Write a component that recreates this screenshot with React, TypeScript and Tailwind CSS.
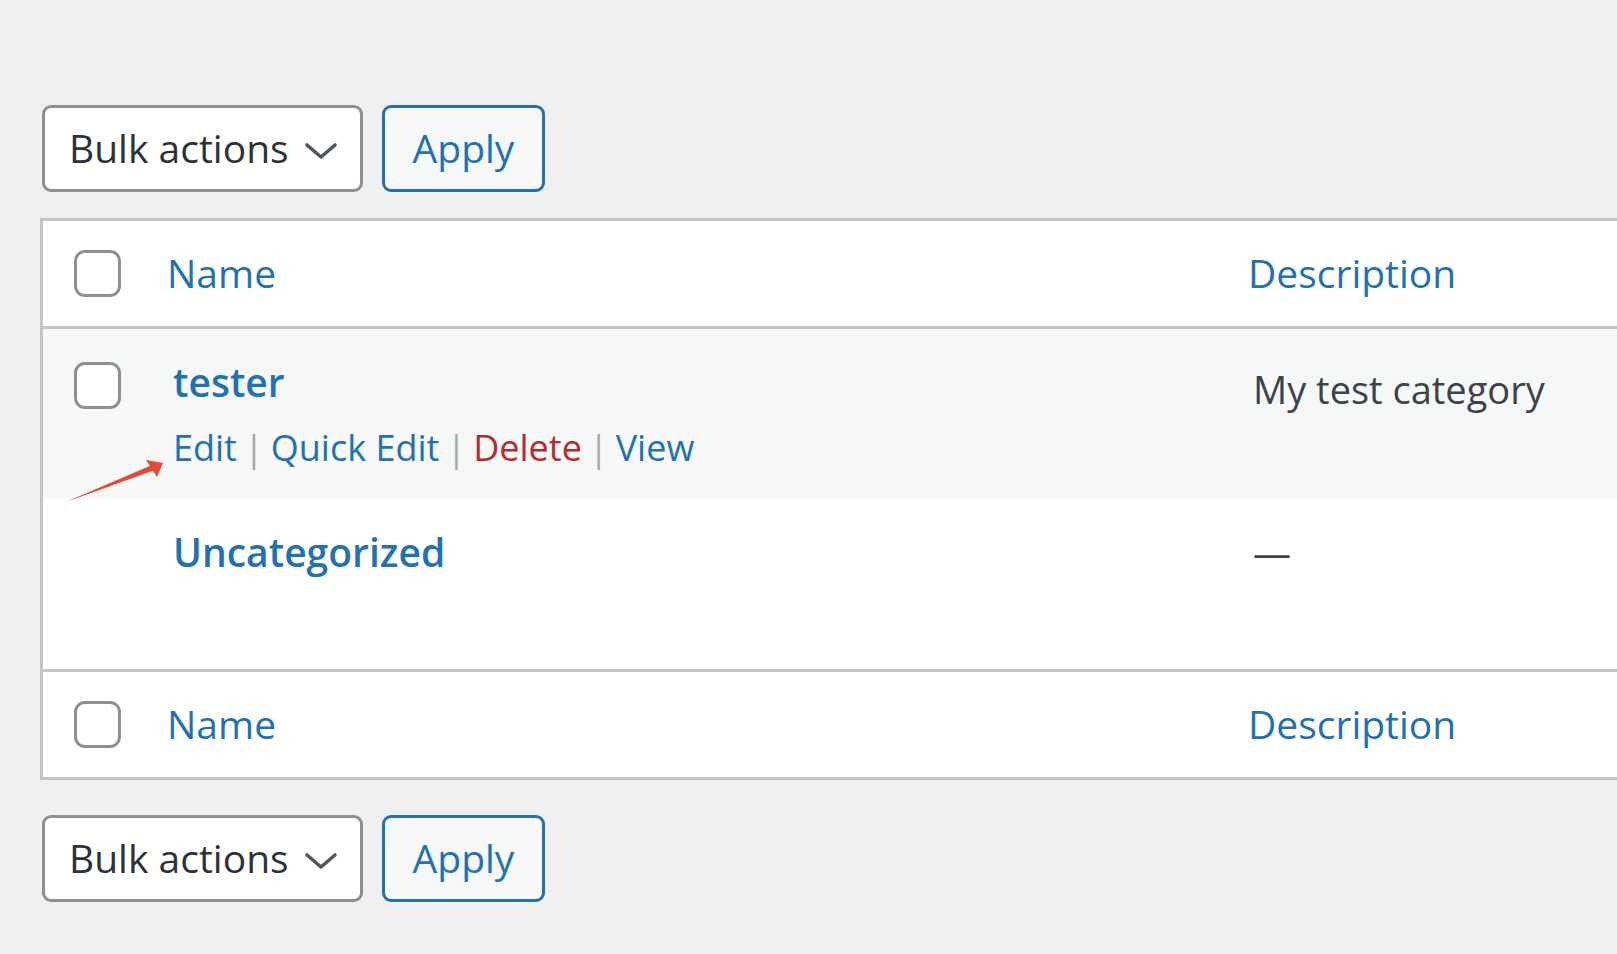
const font = { fontFamily: '"Open Sans", "Noto Sans", sans-serif' };

function Checkbox() {
  return (
    <span className="block w-[47px] h-[47px] rounded-[11px] border-[3px] border-[#8c8f94] bg-white" />
  );
}

function TableNav() {
  return (
    <div className="flex items-center gap-[19px]">
      <div className="flex items-center justify-between w-[321px] h-[87px] rounded-[9px] border-[3px] border-[#8c8f94] bg-white pl-[24px] pr-[22px] text-[#2c3338] text-[39px]">
        <span>Bulk actions</span>
        <svg width="34" height="20" viewBox="0 0 34 20" className="mt-[4px]">
          <polyline
            points="3,4 17,16 31,4"
            fill="none"
            stroke="#50575e"
            strokeWidth="3.6"
            strokeLinecap="round"
            strokeLinejoin="round"
          />
        </svg>
      </div>
      <button className="h-[87px] w-[163px] rounded-[9px] border-[3px] border-[#2271b1] bg-[#f6f7f7] text-[#2271b1] text-[39px]">
        Apply
      </button>
    </div>
  );
}

function HeaderRow({ top }: { top?: boolean }) {
  return (
    <div
      className={
        "flex items-center h-[108px] bg-white " +
        (top ? "border-b-[3px] border-[#c3c4c7]" : "border-t-[3px] border-[#c3c4c7]")
      }
    >
      <div className="w-[124px] pl-[31px]">
        <Checkbox />
      </div>
      <div className="w-[1081px] text-[#2271b1] text-[39px]">Name</div>
      <div className="text-[#2271b1] text-[39px]">Description</div>
    </div>
  );
}

function Sep() {
  return <span className="text-[#a7aaad] mx-[7px]">|</span>;
}

export default function App() {
  return (
    <div className="relative w-full h-[954px] overflow-hidden bg-[#f0f0f1]" style={font}>
      <div className="pl-[42px] pt-[105px]">
        <TableNav />
      </div>

      <div className="ml-[40px] mt-[26px] w-[1700px] border-[3px] border-[#c3c4c7] bg-white">
        <HeaderRow top />

        <div className="flex h-[170px] bg-[#f6f7f7]">
          <div className="w-[124px] pl-[31px] pt-[33px]">
            <Checkbox />
          </div>
          <div className="w-[1081px] pl-[6px] pt-[27px]">
            <div className="text-[#2271b1] text-[39px] font-semibold leading-[52px]">tester</div>
            <div className="text-[36px] leading-[52px] mt-[14px]">
              <span className="text-[#2271b1]">Edit</span>
              <Sep />
              <span className="text-[#2271b1]">Quick Edit</span>
              <Sep />
              <span className="text-[#b32d2e]">Delete</span>
              <Sep />
              <span className="text-[#2271b1]">View</span>
            </div>
          </div>
          <div className="pl-[5px] pt-[34px] text-[#3c434a] text-[38px] leading-[52px]">
            My test category
          </div>
        </div>

        <div className="flex h-[170px] bg-white">
          <div className="w-[124px]" />
          <div className="w-[1081px] pl-[6px] pt-[27px]">
            <div className="text-[#2271b1] text-[39px] font-semibold leading-[52px]">
              Uncategorized
            </div>
          </div>
          <div className="pl-[5px] pt-[27px] text-[#3c434a] text-[38px] leading-[52px]">—</div>
        </div>

        <HeaderRow />
      </div>

      <div className="pl-[42px] mt-[35px]">
        <TableNav />
      </div>

      <svg className="absolute left-0 top-0 pointer-events-none" width="200" height="520">
        <polygon points="66,502 152,465 155,470" fill="#e5483a" />
        <polygon points="163,463 146,460 157,477" fill="#e5483a" />
      </svg>
    </div>
  );
}
